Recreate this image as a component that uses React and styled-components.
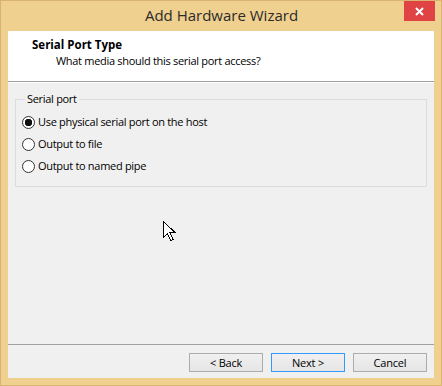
import React from 'react';
import styled, { createGlobalStyle } from 'styled-components';

const GlobalStyle = createGlobalStyle`
  html, body {
    margin: 0;
    padding: 0;
    background: #ffffff;
  }
  body {
    font-family: "Open Sans", "Noto Sans", sans-serif;
    font-size: 11px;
    letter-spacing: -0.3px;
    color: #000;
  }
`;

const options = [
  { label: 'Use physical serial port on the host', checked: true },
  { label: 'Output to file', checked: false },
  { label: 'Output to named pipe', checked: false },
];

function Cursor() {
  return (
    <CursorBox>
      <svg width="13" height="21" viewBox="0 0 13 21">
        <path
          d="M0.5 0.5 L0.5 16.5 L4.5 12.5 L7.5 19.5 L10 18.5 L7 11.5 L12 11.5 Z"
          fill="#fff"
          stroke="#000"
          strokeWidth="1"
          shapeRendering="crispEdges"
        />
      </svg>
    </CursorBox>
  );
}

function App() {
  return (
    <>
      <GlobalStyle />
      <Frame>
        <TitleBar>
          <Title>Add Hardware Wizard</Title>
          <CloseBtn>
            <svg width="9" height="9" viewBox="0 0 9 9">
              <path d="M1 1 L8 8 M8 1 L1 8" stroke="#fff" strokeWidth="2" />
            </svg>
          </CloseBtn>
        </TitleBar>
        <Client>
          <Header>
            <HeaderTitle>Serial Port Type</HeaderTitle>
            <HeaderSub>What media should this serial port access?</HeaderSub>
          </Header>
          <Body>
            <Group>
              <Legend>Serial port</Legend>
              {options.map((o) => (
                <RadioRow key={o.label}>
                  <RadioCircle $checked={o.checked} />
                  <span>{o.label}</span>
                </RadioRow>
              ))}
            </Group>
            <Cursor />
          </Body>
          <Footer>
            <Button>&lt; Back</Button>
            <Button $default>Next &gt;</Button>
            <Button>Cancel</Button>
          </Footer>
        </Client>
      </Frame>
    </>
  );
}

const Frame = styled.div`
  width: 442px;
  height: 386px;
  box-sizing: border-box;
  background: #f0d08e;
  border: 1px solid #d9b470;
  display: flex;
  flex-direction: column;
  padding: 0 7px 7px 7px;
`;

const TitleBar = styled.div`
  height: 30px;
  position: relative;
  display: flex;
  align-items: center;
  justify-content: center;
`;

const Title = styled.div`
  font-family: "Open Sans", "Noto Sans", sans-serif;
  font-size: 15px;
  letter-spacing: 0;
  color: #2b2b2b;
  margin-top: -2px;
  margin-left: 1px;
`;

const CloseBtn = styled.div`
  position: absolute;
  top: 0;
  right: -1px;
  width: 31px;
  height: 20px;
  background: #e04343;
  display: flex;
  align-items: center;
  justify-content: center;
`;

const Client = styled.div`
  flex: 1;
  background: #f0f0f0;
  display: flex;
  flex-direction: column;
`;

const Header = styled.div`
  height: 51px;
  box-sizing: border-box;
  background: #ffffff;
  border-bottom: 1px solid #a0a0a0;
  padding: 6px 0 0 24px;
`;

const HeaderTitle = styled.div`
  font-weight: bold;
  font-size: 11.5px;
  letter-spacing: 0;
  line-height: 16px;
`;

const HeaderSub = styled.div`
  line-height: 16px;
  padding-left: 24px;
`;

const Body = styled.div`
  flex: 1;
  position: relative;
  padding: 9px 7px 0 7px;
  border-top: 1px solid #ffffff;
`;

const Group = styled.fieldset`
  margin: 0;
  border: 1px solid #dcdcdc;
  padding: 8px 0 8px 6px;
  height: 95px;
  box-sizing: border-box;
  display: flex;
  flex-direction: column;
  gap: 6px;
`;

const Legend = styled.legend`
  padding: 0 2px;
  margin-left: 3px;
  line-height: 14px;
`;

const RadioRow = styled.div`
  display: flex;
  align-items: center;
  gap: 3px;
  height: 16px;
  line-height: 16px;
`;

const RadioCircle = styled.span`
  width: 13px;
  height: 13px;
  box-sizing: border-box;
  border-radius: 50%;
  border: 1px solid #333;
  background: ${(p) => (p.$checked ? 'radial-gradient(circle, #111 0 3.5px, #fff 4px)' : '#fff')};
  flex: none;
`;

const CursorBox = styled.div`
  position: absolute;
  left: 155px;
  top: 138px;
  line-height: 0;
`;

const Footer = styled.div`
  height: 34px;
  border-top: 1px solid #a0a0a0;
  display: flex;
  justify-content: flex-end;
  align-items: flex-start;
  gap: 8px;
  padding: 8px 7px 0 0;
  box-sizing: border-box;
`;

const Button = styled.button`
  width: 74px;
  height: 19px;
  box-sizing: border-box;
  border: 1px solid ${(p) => (p.$default ? '#3399ff' : '#acacac')};
  background: linear-gradient(#f0f0f0, #e5e5e5);
  font-family: "Open Sans", "Noto Sans", sans-serif;
  font-size: 11px;
  letter-spacing: -0.2px;
  color: #000;
  padding: 0;
  line-height: 16px;
`;

export default App;
